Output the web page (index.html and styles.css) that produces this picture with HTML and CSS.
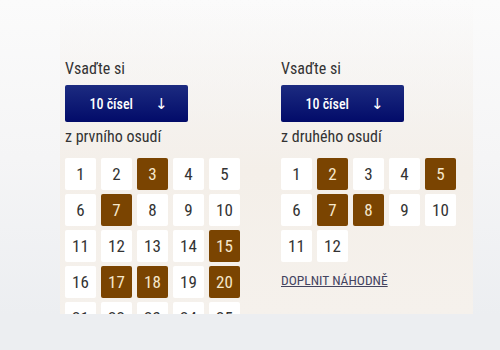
FILE: index.html
```html
<!DOCTYPE html>
<html lang="cs">
<head>
	<meta charset="UTF-8">
	<title>Vsaďte si</title>
	<link rel="stylesheet" href="styles.css">
</head>
<body>
	<div class="panel">
		<div class="col">
			<div class="label">Vsaďte si</div>
			<button class="btn">10 čísel <span class="arrow">↓</span></button>
			<div class="sub">z prvního osudí</div>
			<ul class="grid">
				<li>1</li><li>2</li><li class="on">3</li><li>4</li><li>5</li>
				<li>6</li><li class="on">7</li><li>8</li><li>9</li><li>10</li>
				<li>11</li><li>12</li><li>13</li><li>14</li><li class="on">15</li>
				<li>16</li><li class="on">17</li><li class="on">18</li><li>19</li><li class="on">20</li>
				<li>21</li><li>22</li><li>23</li><li>24</li><li>25</li>
			</ul>
		</div>
		<div class="col">
			<div class="label">Vsaďte si</div>
			<button class="btn">10 čísel <span class="arrow">↓</span></button>
			<div class="sub">z druhého osudí</div>
			<ul class="grid">
				<li>1</li><li class="on">2</li><li>3</li><li>4</li><li class="on">5</li>
				<li>6</li><li class="on">7</li><li class="on">8</li><li>9</li><li>10</li>
				<li>11</li><li>12</li>
			</ul>
			<a class="random" href="#">DOPLNIT NÁHODNĚ</a>
		</div>
	</div>
</body>
</html>
```

FILE: styles.css
```css
*{
	margin: 0;
	padding: 0;
	list-style: none;
	box-sizing: border-box;
}
body{
	height: 350px;
	overflow: hidden;
	background: linear-gradient(#fbfbfb, #f5f5f6 45%, #eceef1 90%);
	font-family: "Roboto Condensed", "Roboto", "Liberation Sans", sans-serif;
	color: #333;
}
.panel{
	margin-left: 60px;
	width: 413px;
	height: 314px;
	overflow: hidden;
	padding: 58px 0 0 5px;
	display: flex;
	gap: 41px;
	background: linear-gradient(rgba(244,239,233,0) 0, rgba(244,239,233,0.5) 100px, #f4efe9 170px, #f5f1ec);
}
.col{
	width: 175px;
}
.label{
	font-size: 16px;
	line-height: 22px;
	color: #333;
}
.btn{
	display: flex;
	align-items: center;
	justify-content: center;
	gap: 22px;
	width: 123px;
	height: 37px;
	margin-top: 5px;
	padding-left: 4px;
	border: none;
	border-radius: 2px;
	background: linear-gradient(#1c2b80, #020b69);
	color: #fff;
	font-family: inherit;
	font-size: 14px;
	font-weight: 500;
}
.arrow{
	font-size: 15px;
	font-family: "DejaVu Sans", sans-serif;
	font-weight: normal;
}
.sub{
	margin-top: 4px;
	font-size: 16px;
	line-height: 22px;
}
.grid{
	margin-top: 10px;
	display: grid;
	grid-template-columns: repeat(5, 31px);
	grid-auto-rows: 32px;
	column-gap: 5px;
	row-gap: 4px;
}
.grid li{
	background: #fff;
	border-radius: 2px;
	display: flex;
	align-items: center;
	justify-content: center;
	font-size: 17px;
	color: #333;
}
.grid .on{
	background: #7a4401;
	color: #f6e8cc;
}
.random{
	display: inline-block;
	margin-top: 10px;
	font-size: 13.5px;
	color: #44445f;
	text-decoration: underline;
}
```
